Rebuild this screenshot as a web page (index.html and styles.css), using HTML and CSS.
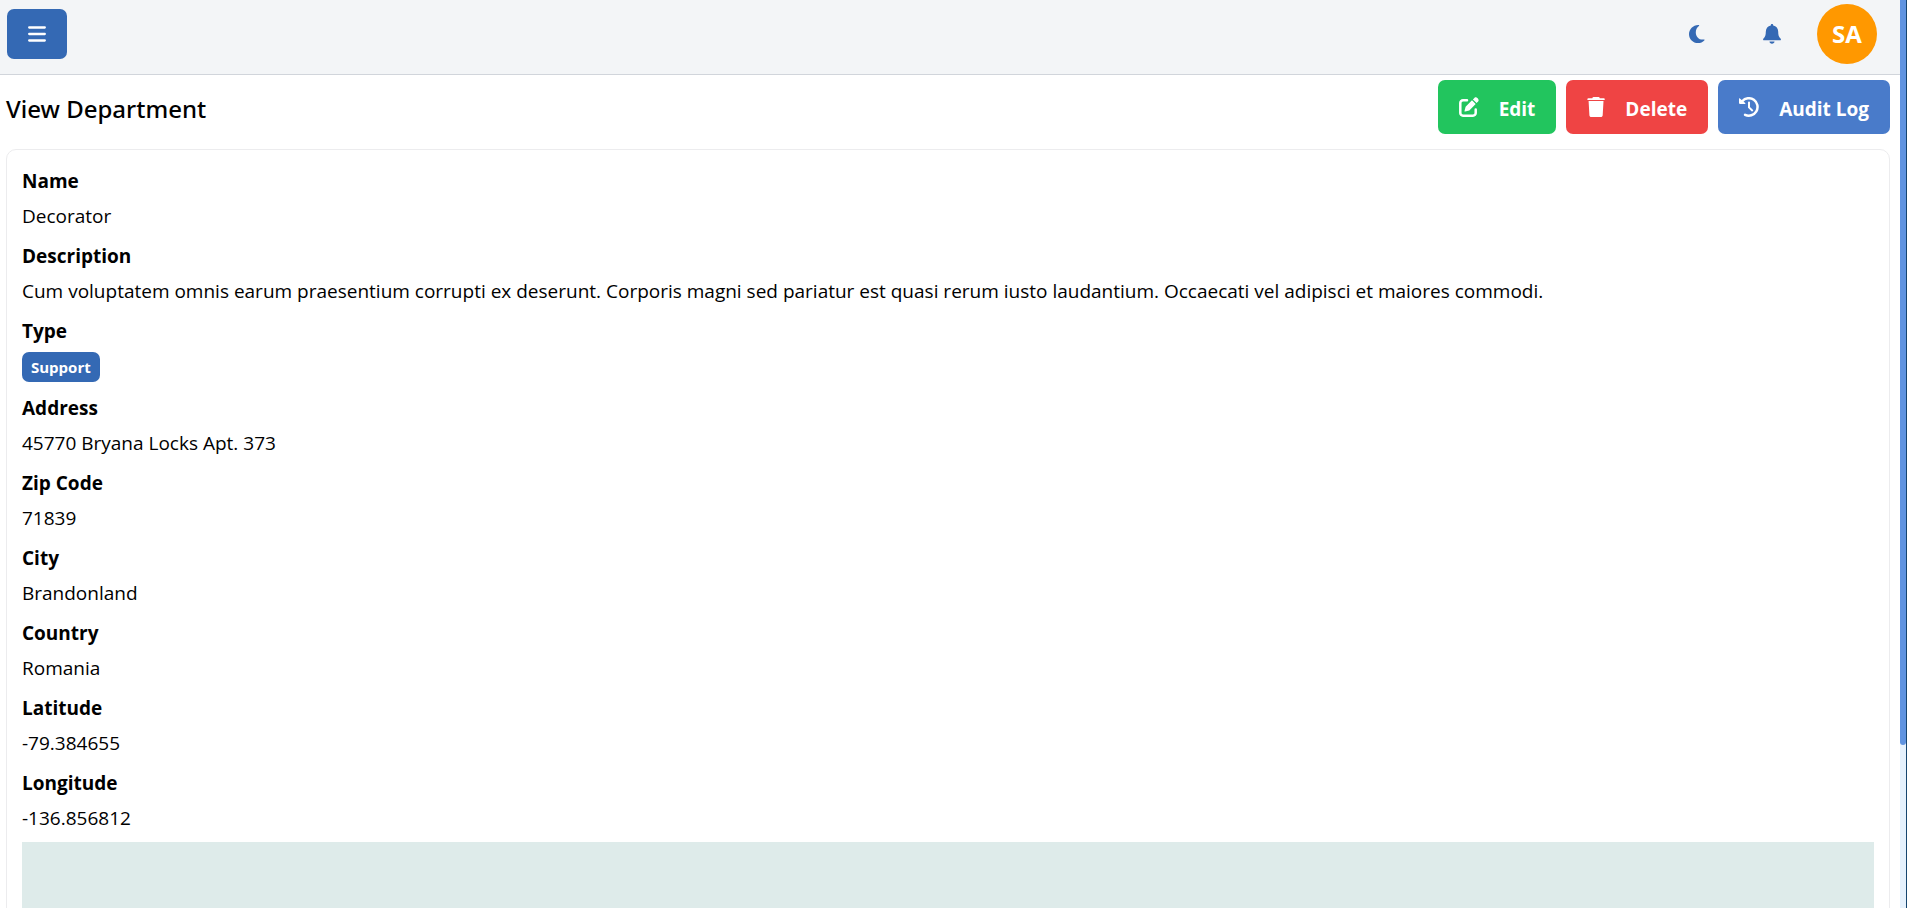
FILE: index.html
```html
<!DOCTYPE html>
<html lang="en">
<head>
<meta charset="utf-8">
<meta name="viewport" content="width=device-width, initial-scale=1">
<title>View Department</title>
<link rel="stylesheet" href="styles.css">
</head>
<body>
<div class="app">
  <div class="page">
    <header class="topbar">
      <button class="menu-btn" type="button" aria-label="Toggle menu">
        <svg viewBox="0 0 18 16" width="18" height="16" stroke="currentColor" stroke-width="2.300" stroke-linecap="round"><path d="M1.200 1.500h15.600M1.200 8h15.600M1.200 14.500h15.600"/></svg>
      </button>
      <div class="topbar-tools">
        <button class="icon-btn" type="button" aria-label="Dark mode">
          <svg viewBox="0 0 16 18" width="16" height="18" fill="currentColor"><path d="M9.300 0C4 .2 0 4.200 0 9.200 0 14.200 4 18 9 18c2.500 0 4.800-.9 6.300-2.600.5-.5.200-1-.4-.9C10.200 15.200 6.800 11.800 6.800 7.400 6.800 4.700 7.900 2.300 9.900 1 10.500.6 10.200 0 9.300 0z"/></svg>
        </button>
        <button class="icon-btn" type="button" aria-label="Notifications">
          <svg viewBox="0 0 18 20" width="18" height="20" fill="currentColor"><path d="M9 0c.7 0 1.200.5 1.200 1.200v.4c3 .6 5 3 5 6.100 0 3.500.6 5 2.300 6.800.9.900.3 1.800-.7 1.800H1.200c-1 0-1.600-.9-.7-1.800C2.200 12.700 2.800 11.200 2.800 7.700c0-3.100 2-5.500 5-6.100v-.4C7.800.5 8.300 0 9 0zM6.500 17.600h5C11.500 18.900 10.400 19.800 9 19.800s-2.500-.9-2.500-2.200z"/></svg>
        </button>
        <button class="avatar" type="button" aria-label="Account">SA</button>
      </div>
    </header>
    <main class="content">
      <div class="heading">
        <h1 class="title">View Department</h1>
        <div class="actions">
          <button class="btn btn-edit" type="button">
            <svg viewBox="0 0 20 20" width="20" height="20" fill="none"><path d="M8 3.200H4A2.700 2.700 0 0 0 1.300 6v10A2.700 2.700 0 0 0 4 18.700h10a2.700 2.700 0 0 0 2.700-2.700V12.500" stroke="currentColor" stroke-width="2.500" stroke-linecap="round"/><path d="M6.600 9.700l6.400-6.400 3.700 3.700-6.400 6.400-4.200 1.100a.5.5 0 0 1-.6-.6zM13.900 2.400L15.400.9c1.900-1.900 5.600 1.800 3.700 3.700L17.600 6.100z" fill="currentColor"/></svg>
            <span>Edit</span>
          </button>
          <button class="btn btn-delete" type="button">
            <svg viewBox="0 0 18 20" width="18" height="20" fill="currentColor"><path d="M6.500 0h5a1 1 0 0 1 1 .6l.3.600h3.900c.6 0 1 .4 1 .9v1H.4v-1c0-.5.4-.9 1-.9h3.900l.3-.600A1 1 0 0 1 6.500 0zM1.600 3.900h14.900l-.8 14.300c-.1 1.100-.8 1.800-1.900 1.800H4.300c-1.100 0-1.800-.7-1.900-1.800z"/></svg>
            <span>Delete</span>
          </button>
          <button class="btn btn-audit" type="button">
            <svg viewBox="0 0 20 20" width="20" height="20" fill="none"><path d="M3.200 4.300a8.700 8.700 0 1 1 2.900 13.500" stroke="currentColor" stroke-width="2.500" stroke-linecap="round"/><path d="M10 5.600v4.800l3.200 3" stroke="currentColor" stroke-width="2" stroke-linecap="round"/><path d="M0 1.800C0 1.300.5 1.100.9 1.500l5.300 4.400c.4.400.2 1-.4 1H.8C.3 6.900 0 6.600 0 6.100z" fill="currentColor"/></svg>
            <span>Audit Log</span>
          </button>
        </div>
      </div>
      <section class="card">
        <dl class="fields">
          <div class="field"><dt>Name</dt><dd>Decorator</dd></div>
          <div class="field"><dt>Description</dt><dd>Cum voluptatem omnis earum praesentium corrupti ex deserunt. Corporis magni sed pariatur est quasi rerum iusto laudantium. Occaecati vel adipisci et maiores commodi.</dd></div>
          <div class="field"><dt>Type</dt><dd class="tag-row"><span class="tag">Support</span></dd></div>
          <div class="field"><dt>Address</dt><dd>45770 Bryana Locks Apt. 373</dd></div>
          <div class="field"><dt>Zip Code</dt><dd>71839</dd></div>
          <div class="field"><dt>City</dt><dd>Brandonland</dd></div>
          <div class="field"><dt>Country</dt><dd>Romania</dd></div>
          <div class="field"><dt>Latitude</dt><dd>-79.384655</dd></div>
          <div class="field"><dt>Longitude</dt><dd>-136.856812</dd></div>
        </dl>
        <div class="map"></div>
      </section>
    </main>
  </div>
  <div class="scroll-track"><div class="scroll-thumb"></div></div>
</div>
</body>
</html>
```

FILE: styles.css
```css
* { box-sizing: border-box; }

body {
  margin: 0;
  background: #fff;
  color: #000;
  font-family: "Segoe UI", "Open Sans", "Noto Sans", sans-serif;
  font-size: 19px;
  line-height: 30px;
}

button {
  border: 0;
  font: inherit;
  cursor: pointer;
}

svg { display: block; flex: none; }

.app {
  display: flex;
  height: 100vh;
  overflow: hidden;
}

.page {
  flex: 1;
  min-width: 0;
  overflow: hidden;
}

.topbar {
  display: flex;
  align-items: flex-start;
  justify-content: space-between;
  padding: 4px 23px 10px 7px;
  background: #f3f5f7;
  border-bottom: 1px solid #d1d5db;
}

.menu-btn {
  display: flex;
  align-items: center;
  justify-content: center;
  width: 60px;
  height: 50px;
  margin-top: 5px;
  border-radius: 7px;
  background: #3469b4;
  color: #fff;
}

.topbar-tools {
  display: flex;
  align-items: center;
}

.icon-btn {
  display: flex;
  align-items: center;
  justify-content: center;
  width: 75px;
  height: 50px;
  padding: 0;
  background: none;
  color: #3469b4;
}

.avatar {
  width: 60px;
  height: 60px;
  margin-left: 8px;
  padding: 0;
  border-radius: 50%;
  background: #ff9800;
  color: #fff;
  font-size: 24px;
  font-weight: 700;
}

.content { padding: 5px 10px 0 6px; }

.heading {
  display: flex;
  align-items: center;
  justify-content: space-between;
  margin-bottom: 15px;
}

.title {
  margin: 0;
  padding-top: 3px;
  font-family: "Segoe UI", "Noto Sans", sans-serif;
  font-size: 24px;
  font-weight: 500;
}

.actions { display: flex; gap: 10px; }

.btn {
  display: flex;
  align-items: center;
  gap: 20px;
  height: 54px;
  padding: 0 21px;
  border-radius: 7px;
  color: #fff;
  font-weight: 700;
}

.btn span { padding-top: 3px; }

.btn-edit { background: #22c55e; }
.btn-delete { background: #ef4444; }
.btn-audit { background: #497bca; }

.card {
  padding: 16px 15px;
  border: 1px solid #ececee;
  border-radius: 10px;
}

.fields {
  display: grid;
  gap: 10px;
  margin: 0 0 9px;
}

.field { display: grid; gap: 5px; }

dt { font-weight: 700; }

dd { margin: 0; }

.tag-row { display: flex; padding: 1px 0; }

.tag {
  padding: 0 9px;
  border-radius: 7px;
  background: #3469b4;
  color: #fff;
  font-size: 15px;
  font-weight: 700;
}

.map {
  height: 400px;
  background: #deebea;
}

.scroll-track {
  width: 7px;
  background: #e5f1fd;
  border-right: 1px solid #16456f;
}

.scroll-thumb {
  height: 82%;
  border-radius: 0 0 3px 3px;
  background: #5f93e0;
}
```
